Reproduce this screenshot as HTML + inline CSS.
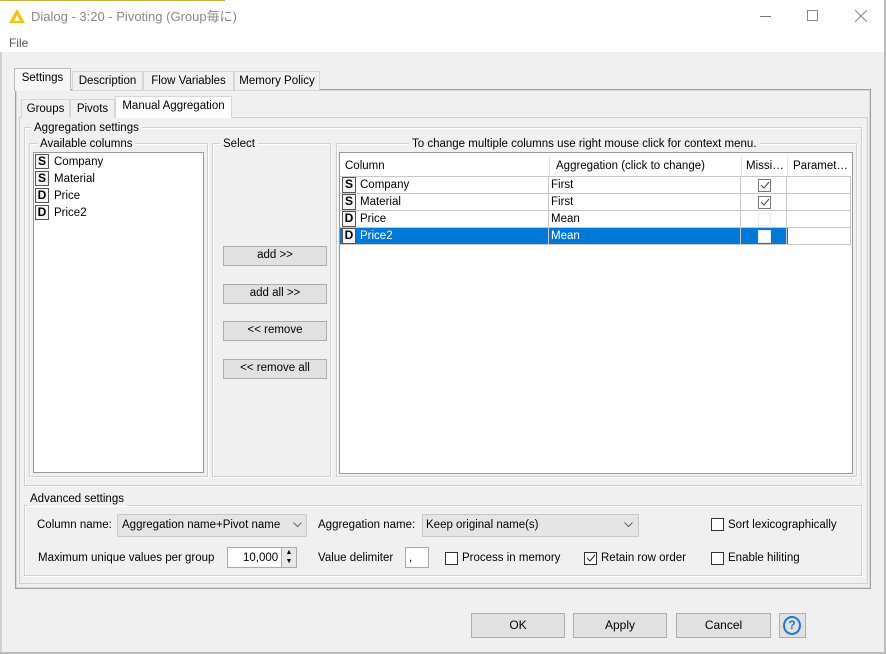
<!DOCTYPE html>
<html><head><meta charset="utf-8"><style>
*{box-sizing:border-box;margin:0;padding:0}
body{width:886px;height:654px;background:#f0f0f0;font-family:"Liberation Sans","Noto Sans CJK JP",sans-serif;font-size:11.5px;color:#000;position:relative;overflow:hidden}
.a{position:absolute}
.t{position:absolute;white-space:nowrap;line-height:14px}
.grp{position:absolute;border:1px solid #d0d0d0;box-shadow:inset 1px 1px 0 #fff,1px 1px 0 #fff}
.lbl{position:absolute;background:#f0f0f0;padding:0 3px;line-height:14px;white-space:nowrap}
.btn{position:absolute;background:#e1e1e1;border:1px solid #adadad;text-align:center;line-height:17px}
.tab{position:absolute;border:1px solid #d6d6d6;border-bottom:none;background:#f0f0f0;text-align:center;line-height:18px}
.ic{display:inline-block;width:14px;height:15px;border:1px solid #555;font-weight:bold;font-size:12px;line-height:13px;text-align:center;background:#f4f4f4;margin-right:5px;vertical-align:top}
.cb{position:absolute;width:13px;height:13px;border:1px solid #333;background:#fff}
.cell{position:absolute;border-right:1px solid #c8c8c8;border-bottom:1px solid #c8c8c8;line-height:16px;padding-left:2px;white-space:nowrap}
.arr{position:absolute}
</style></head><body>
<div class="a" style="left:0;top:0;width:886px;height:52px;background:#fff"></div>
<div class="a" style="left:0;top:0;width:225px;height:1px;background:#c9b040"></div>
<svg class="a" style="left:9px;top:9px" width="16" height="14"><polygon points="8,0 16,14 0,14" fill="#f5c400"/><polygon points="8,6 11,12 5,12" fill="#fff"/></svg>
<div class="t" style="left:31px;top:10px;font-size:13px;color:#888">Dialog - 3:20 - Pivoting (Group毎に)</div>
<div class="a" style="left:760px;top:16px;width:11px;height:1px;background:#777"></div>
<div class="a" style="left:807px;top:10px;width:11px;height:11px;border:1px solid #888"></div>
<svg class="a" style="left:855px;top:10px" width="12" height="12"><path d="M0 0L12 12M12 0L0 12" stroke="#888" stroke-width="1"/></svg>
<div class="t" style="left:9px;top:36px;color:#555;font-size:12px">File</div>
<div class="a" style="left:884px;top:0;width:2px;height:654px;background:#bbb"></div>
<div class="a" style="left:0;top:652px;width:886px;height:2px;background:#bbb"></div>
<div class="a" style="left:0;top:52px;width:2px;height:600px;background:#d0d0d0"></div>

<div class="a" style="left:15px;top:89px;width:856px;height:500px;border:1px solid #a0a0a0;box-shadow:inset 0 0 0 1px #d8d8d8"></div>
<div class="tab" style="left:72px;top:71px;width:71px">Description</div>
<div class="tab" style="left:143px;top:71px;width:91px">Flow Variables</div>
<div class="tab" style="left:234px;top:71px;width:86px">Memory Policy</div>
<div class="tab" style="left:14px;top:68px;width:57px;height:23px;background:#f7f7f7;border-color:#bbb">Settings</div>

<div class="a" style="left:19px;top:117px;width:849px;height:467px;border:1px solid #d0d0d0"></div>
<div class="tab" style="left:21px;top:99px;width:49px">Groups</div>
<div class="tab" style="left:70px;top:99px;width:45px">Pivots</div>
<div class="tab" style="left:115px;top:96px;width:117px;height:22px;background:#fff">Manual Aggregation</div>

<div class="grp" style="left:24px;top:127px;width:838px;height:359px"></div>
<div class="lbl" style="left:31px;top:121px">Aggregation settings</div>

<div class="grp" style="left:29px;top:143px;width:179px;height:334px"></div>
<div class="lbl" style="left:37px;top:137px">Available columns</div>
<div class="a" style="left:33px;top:152px;width:171px;height:321px;background:#fff;border:1px solid #999"></div>
<div class="t" style="left:35px;top:154px;line-height:17px"><span class="ic">S</span>Company</div>
<div class="t" style="left:35px;top:171px;line-height:17px"><span class="ic">S</span>Material</div>
<div class="t" style="left:35px;top:188px;line-height:17px"><span class="ic">D</span>Price</div>
<div class="t" style="left:35px;top:205px;line-height:17px"><span class="ic">D</span>Price2</div>

<div class="grp" style="left:212px;top:143px;width:119px;height:334px"></div>
<div class="lbl" style="left:220px;top:137px">Select</div>
<div class="btn" style="left:223px;top:246px;width:104px;height:20px">add &gt;&gt;</div>
<div class="btn" style="left:223px;top:284px;width:104px;height:20px">add all &gt;&gt;</div>
<div class="btn" style="left:223px;top:321px;width:104px;height:20px">&lt;&lt; remove</div>
<div class="btn" style="left:223px;top:359px;width:104px;height:20px">&lt;&lt; remove all</div>

<div class="grp" style="left:336px;top:143px;width:521px;height:334px"></div>
<div class="lbl" style="left:409px;top:137px">To change multiple columns use right mouse click for context menu.</div>
<div class="a" style="left:339px;top:152px;width:514px;height:322px;background:#fff;border:1px solid #999"></div>
<div class="t" style="left:345px;top:159px">Column</div>
<div class="a" style="left:549px;top:155px;width:1px;height:22px;background:#e5e5e5"></div>
<div class="t" style="left:556px;top:159px">Aggregation (click to change)</div>
<div class="a" style="left:741px;top:155px;width:1px;height:22px;background:#e5e5e5"></div>
<div class="t" style="left:746px;top:159px">Missi…</div>
<div class="a" style="left:787px;top:155px;width:1px;height:22px;background:#e5e5e5"></div>
<div class="t" style="left:793px;top:159px">Paramet…</div>
<div class="a" style="left:340px;top:176px;width:511px;height:1px;background:#c8c8c8"></div>
<div class="a" style="left:340px;top:228px;width:448px;height:17px;background:#0078d7"></div>
<div class="cell" style="left:340px;top:177px;width:209px;height:17px"><span class="ic" style="margin:0 4px 0 0;height:16px">S</span>Company</div>
<div class="cell" style="left:340px;top:194px;width:209px;height:17px"><span class="ic" style="margin:0 4px 0 0;height:16px">S</span>Material</div>
<div class="cell" style="left:340px;top:211px;width:209px;height:17px"><span class="ic" style="margin:0 4px 0 0;height:16px">D</span>Price</div>
<div class="cell" style="left:340px;top:228px;width:209px;height:17px;color:#fff"><span class="ic" style="margin:0 4px 0 0;height:16px;color:#000">D</span>Price2</div>
<div class="cell" style="left:549px;top:177px;width:192px;height:17px">First</div>
<div class="cell" style="left:549px;top:194px;width:192px;height:17px">First</div>
<div class="cell" style="left:549px;top:211px;width:192px;height:17px">Mean</div>
<div class="cell" style="left:549px;top:228px;width:192px;height:17px;color:#fff">Mean</div>
<div class="cell" style="left:741px;top:177px;width:46px;height:17px"></div>
<div class="cell" style="left:741px;top:194px;width:46px;height:17px"></div>
<div class="cell" style="left:741px;top:211px;width:46px;height:17px"></div>
<div class="cell" style="left:741px;top:228px;width:46px;height:17px"></div>
<div class="cell" style="left:787px;top:177px;width:64px;height:17px"></div>
<div class="cell" style="left:787px;top:194px;width:64px;height:17px"></div>
<div class="cell" style="left:787px;top:211px;width:64px;height:17px"></div>
<div class="cell" style="left:787px;top:228px;width:64px;height:17px"></div>
<div class="cb" style="left:758px;top:179px;border-color:#777"></div>
<svg class="a" style="left:760px;top:181px" width="10" height="9"><path d="M1 4L4 7L9 1" stroke="#444" fill="none"/></svg>
<div class="cb" style="left:758px;top:196px;border-color:#777"></div>
<svg class="a" style="left:760px;top:198px" width="10" height="9"><path d="M1 4L4 7L9 1" stroke="#444" fill="none"/></svg>
<div class="cb" style="left:758px;top:213px;border-color:#eee"></div>
<div class="cb" style="left:758px;top:230px;border-color:#eee"></div>

<div class="grp" style="left:24px;top:505px;width:838px;height:71px"></div>
<div class="lbl" style="left:27px;top:492px">Advanced settings</div>
<div class="t" style="left:37px;top:518px">Column name:</div>
<div class="a" style="left:117px;top:514px;width:190px;height:23px;background:#e5e5e5;border:1px solid #c8c8c8"></div>
<div class="t" style="left:122px;top:518px">Aggregation name+Pivot name</div>
<svg class="arr" style="left:293px;top:522px" width="9" height="6"><path d="M0.5 0.5L4.5 4.5L8.5 0.5" stroke="#666" fill="none"/></svg>
<div class="t" style="left:318px;top:518px">Aggregation name:</div>
<div class="a" style="left:422px;top:514px;width:217px;height:23px;background:#e5e5e5;border:1px solid #c8c8c8"></div>
<div class="t" style="left:426px;top:518px">Keep original name(s)</div>
<svg class="arr" style="left:624px;top:522px" width="9" height="6"><path d="M0.5 0.5L4.5 4.5L8.5 0.5" stroke="#666" fill="none"/></svg>
<div class="cb" style="left:711px;top:518px"></div>
<div class="t" style="left:728px;top:518px">Sort lexicographically</div>
<div class="t" style="left:38px;top:551px">Maximum unique values per group</div>
<div class="a" style="left:227px;top:547px;width:70px;height:21px;background:#fff;border:1px solid #aaa"></div>
<div class="t" style="left:243px;top:551px">10,000</div>
<div class="a" style="left:281px;top:548px;width:15px;height:19px;background:#e8e8e8;border-left:1px solid #aaa;font-size:7px;line-height:9px;text-align:center">▲<br>▼</div>
<div class="t" style="left:318px;top:551px">Value delimiter</div>
<div class="a" style="left:405px;top:547px;width:24px;height:21px;background:#fff;border:1px solid #aaa"></div>
<div class="t" style="left:409px;top:551px">,</div>
<div class="cb" style="left:445px;top:552px"></div>
<div class="t" style="left:462px;top:551px">Process in memory</div>
<div class="cb" style="left:584px;top:552px"></div>
<svg class="a" style="left:586px;top:554px" width="10" height="9"><path d="M1 4L4 7L9 1" stroke="#222" fill="none"/></svg>
<div class="t" style="left:601px;top:551px">Retain row order</div>
<div class="cb" style="left:711px;top:552px"></div>
<div class="t" style="left:728px;top:551px">Enable hiliting</div>

<div class="btn" style="left:471px;top:613px;width:94px;height:25px;line-height:23px;font-size:12px">OK</div>
<div class="btn" style="left:573px;top:613px;width:94px;height:25px;line-height:23px;font-size:12px">Apply</div>
<div class="btn" style="left:676px;top:613px;width:95px;height:25px;line-height:23px;font-size:12px">Cancel</div>
<div class="btn" style="left:779px;top:613px;width:27px;height:25px"></div>
<div class="a" style="left:783px;top:616px;width:18px;height:19px;border:2px solid #1e78d0;border-radius:50%;color:#1e78d0;font-size:12px;line-height:15px;text-align:center;font-weight:bold">?</div>
</body></html>
